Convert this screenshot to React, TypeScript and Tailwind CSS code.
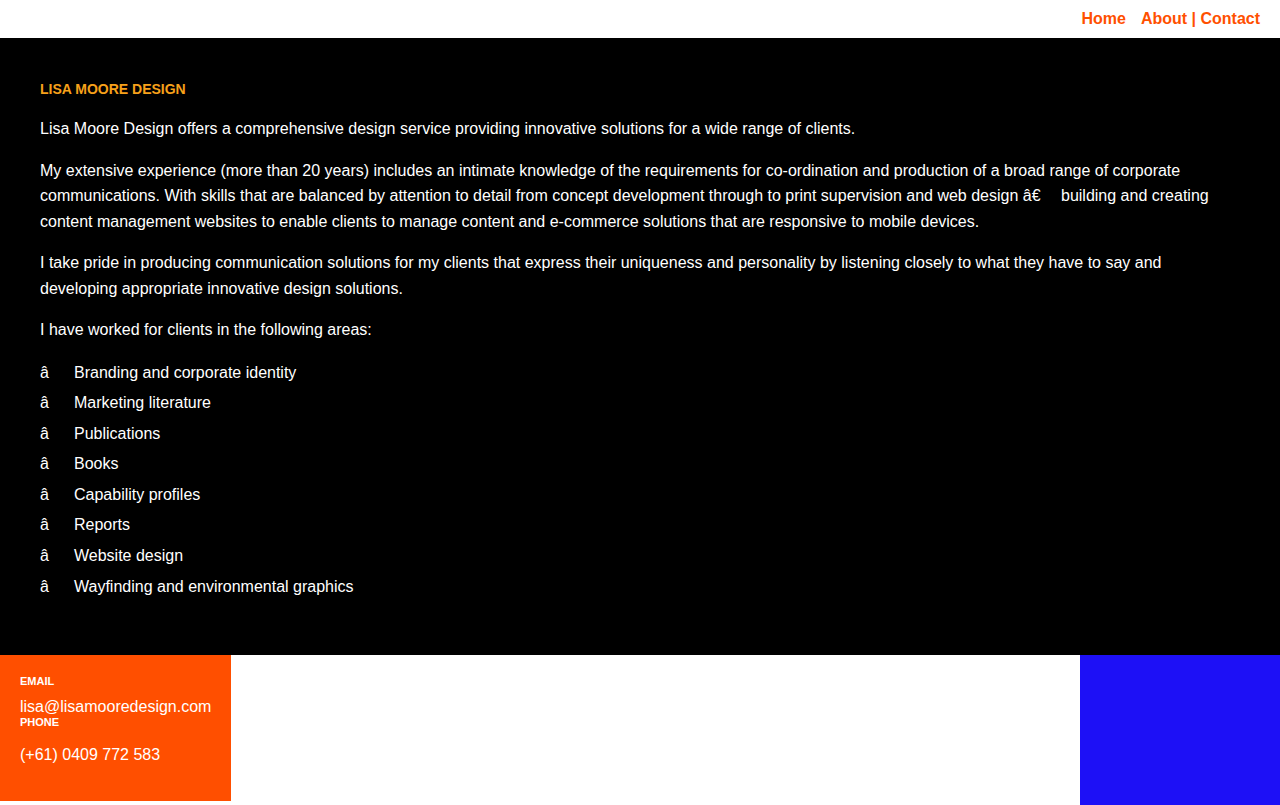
import React from "react";

const items = [
  "Branding and corporate identity",
  "Marketing literature",
  "Publications",
  "Books",
  "Capability profiles",
  "Reports",
  "Website design",
  "Wayfinding and environmental graphics",
];

export default function App() {
  return (
    <div className="min-h-[805px] bg-white font-['Liberation_Sans',Arial,sans-serif]">
      <header className="h-[38px] flex justify-end items-center pr-5 gap-[15px] text-[16px] font-bold text-[#ff5000]">
        <a>Home</a>
        <span>About | Contact</span>
      </header>
      <main className="bg-black px-10 pt-[43px] pb-[56px] text-white text-[16px]">
        <h1 className="text-[14px] leading-[16px] font-bold text-[#f7a11a] mb-[19px]">LISA MOORE DESIGN</h1>
        <p className="leading-[25.5px] mb-4">
          Lisa Moore Design offers a comprehensive design service providing innovative solutions for a wide range of clients.
        </p>
        <p className="leading-[25.5px] mb-4 pr-[10px]">
          My extensive experience (more than 20 years) includes an intimate knowledge of the requirements for co-ordination and production of a broad range of corporate communications. With skills that are balanced by attention to detail from concept development through to print supervision and web design â€{"\u2003"} building and creating content management websites to enable clients to manage content and e-commerce solutions that are responsive to mobile devices.
        </p>
        <p className="leading-[25.5px] mb-4">
          I take pride in producing communication solutions for my clients that express their uniqueness and personality by listening closely to what they have to say and developing appropriate innovative design solutions.
        </p>
        <p className="leading-[25.5px] mb-[17px]">I have worked for clients in the following areas:</p>
        <ul className="flex flex-col gap-[5.1px]">
          {items.map((t) => (
            <li key={t} className="flex leading-[25.5px]">
              <span className="w-[34px]">â</span>
              <span>{t}</span>
            </li>
          ))}
        </ul>
      </main>
      <footer className="flex justify-between items-start">
        <div className="bg-[#ff4f00] text-white px-5 pt-5 h-[146px]">
          <h5 className="text-[11px] leading-[13px] font-bold mb-[10px]">EMAIL</h5>
          <div className="text-[16px] leading-[18px]">lisa@lisamooredesign.com</div>
          <h5 className="text-[11px] leading-[13px] font-bold mb-[17px]">PHONE</h5>
          <div className="text-[16px] leading-[18px]">(+61) 0409 772 583</div>
        </div>
        <div className="bg-[#1d10f6] w-[200px] h-[150px]" />
      </footer>
    </div>
  );
}
